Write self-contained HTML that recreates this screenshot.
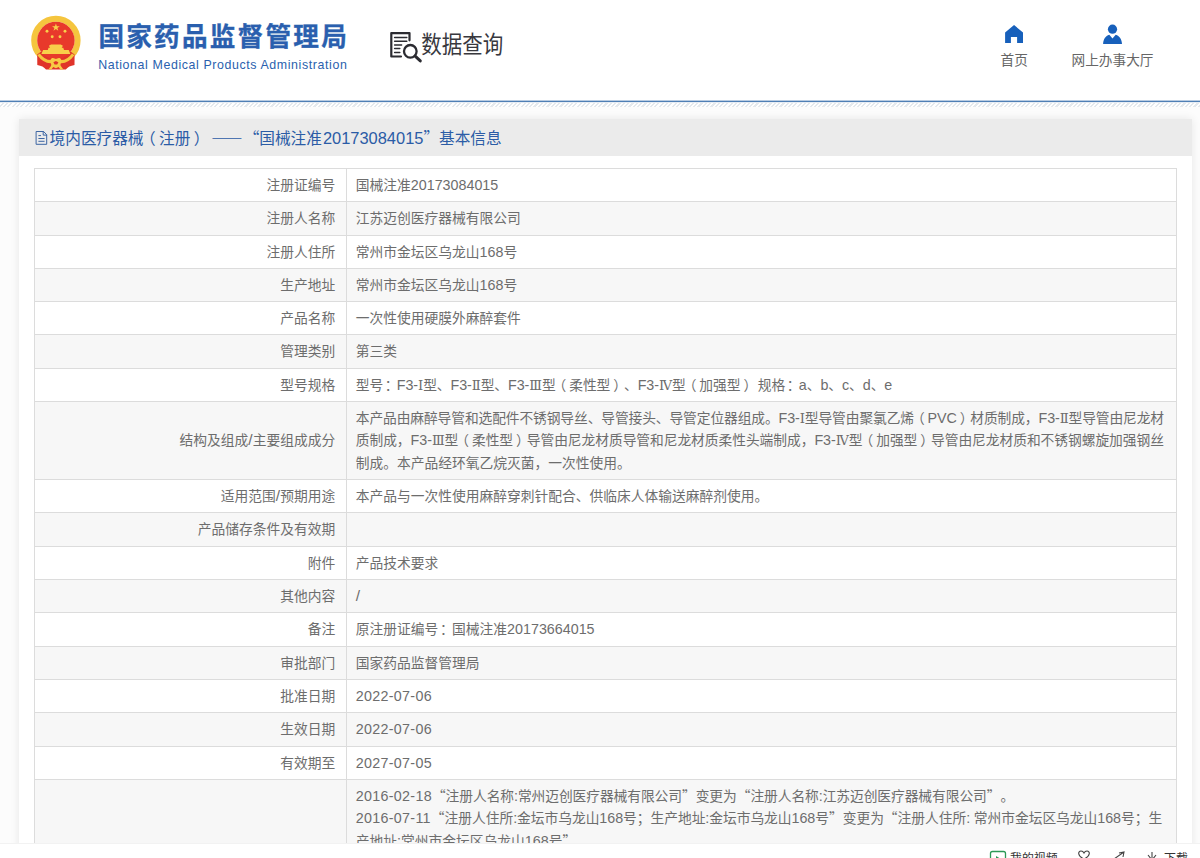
<!DOCTYPE html>
<html lang="zh-CN">
<head>
<meta charset="utf-8">
<title>国家药品监督管理局 数据查询</title>
<style>
*{box-sizing:border-box;margin:0;padding:0}
html,body{width:1200px;height:858px;overflow:hidden;background:#fcfcfc}
body{text-spacing-trim:space-all;font-family:"Liberation Sans","Noto Sans CJK SC",sans-serif;color:#666;position:relative}
.hdr{position:absolute;left:0;top:0;width:1200px;height:101px;background:#fff}
.emblem{position:absolute;left:28px;top:12px;width:56px;height:62px}
.t-cn{-webkit-text-stroke:.35px #2a5fae;position:absolute;left:98.4px;top:17.1px;font-size:25.6px;letter-spacing:2.26px;line-height:40px;font-weight:700;color:#2a5fae;white-space:nowrap}
.t-en{position:absolute;left:98.2px;top:55.7px;font-size:12.4px;letter-spacing:.6px;line-height:18px;color:#2a5fae;white-space:nowrap}
.q-ico{position:absolute;left:385px;top:25px;width:45px;height:43px}
.q-txt{transform:scaleY(1.14);transform-origin:50% 50%;position:absolute;left:421.3px;top:29.2px;font-size:20.5px;line-height:32px;color:#38383e;white-space:nowrap}
.nav{position:absolute;top:51.6px;text-align:center;font-size:13.65px;line-height:18px;color:#666;white-space:nowrap}
.nico{position:absolute;left:995px;top:18px;width:140px;height:30px}
.rule{position:absolute;left:0;top:100px;width:1200px;height:3px;background:linear-gradient(to bottom,rgba(79,127,181,.4) 0,rgba(79,127,181,.4) 1px,#4f7fb5 1px,#4f7fb5 2px,rgba(79,127,181,.12) 2px,rgba(79,127,181,.12) 3px)}
.hatch{position:absolute;left:0;top:102.6px;width:1200px;height:4.7px;
 background:repeating-linear-gradient(135deg,#fff 0,#fff 1.5px,#e5e9ed 1.5px,#e5e9ed 3.05px)}
.card{position:absolute;left:19px;top:118.5px;width:1173px;height:760px;background:#fff;box-shadow:0 0 9px rgba(0,0,0,.09)}
.card-h{position:absolute;left:0;top:0;width:100%;height:37px;background:#ebebeb}
.card-t{position:absolute;left:30.6px;top:9px;font-size:15.65px;line-height:22px;color:#2b5ca6;white-space:nowrap}
.card-t .c{font-family:"Noto Sans CJK SC",sans-serif}
.card-t .n{font-size:16.45px}
.doc-ico{position:absolute;left:11px;top:5.5px;width:40px;height:28px}
table{position:absolute;left:14.7px;top:49.5px;width:1143.8px;border-collapse:collapse;table-layout:fixed;font-size:13.75px;line-height:22.4px;color:#6d6d6d}
td{border:1px solid #dcdcdc;padding:6px 10px 3.9px;vertical-align:middle;white-space:nowrap;overflow:hidden}
td.k{width:312.3px;text-align:right;padding-right:10.8px}
td.v{text-align:left;padding-left:8.8px}
tr:nth-child(even) td{background:#f7f7f7}
tr:last-child td{height:200px}
tr:last-child td.v{vertical-align:top}
.ln{white-space:nowrap}
.n,.rn,.q,.sl,.z,.card-t span{line-height:0}
.d{letter-spacing:.3px}
.z{font-size:0}
.pl,.pr,.co{position:relative;left:-.22em}
.pr{left:.22em}
.co{left:.12em}
.sl{font-size:15.5px}
.n{font-size:14.3px}
.rn{font-family:"DejaVu Serif",serif;font-size:13.2px}
.q{font-family:"Noto Sans CJK SC",sans-serif}
.bbar{position:absolute;left:0;top:843px;width:1200px;height:15px;background:#fff;border-top:1px solid #f2f2f2;overflow:hidden;font-size:11.9px;line-height:16px;color:#333;white-space:nowrap}
.bbar span{position:absolute;top:6px}
.bbar svg{position:absolute;left:980px;top:0;width:220px;height:15px}
</style>
</head>
<body>
<div class="hdr">
  <svg class="emblem" viewBox="28 12 56 62">
    <circle cx="55.9" cy="40.4" r="21.65" fill="none" stroke="#f5c53e" stroke-width="6.1"/>
    <path d="M37.2 54.6 L40.5 52 L71.3 52 L74.6 54.6 L74.5 64.9 C70.5 65.6 67.6 67 65.8 69.4 L46 69.4 C44.2 67 41.3 65.6 37.3 64.9 Z" fill="#e0342a"/>
    <circle cx="55.9" cy="40.4" r="18.7" fill="#e8392b"/>
    <path d="M38.6 54.4 C43.5 61.2 49.5 63 55.9 60.6 C62.3 63 68.3 61.2 73.2 54.4" fill="none" stroke="#f5c53e" stroke-width="3"/>
    <path d="M41.4 54.1 L70.4 54.1 L68.7 50 L64 50 L63.3 47.7 L61.7 47.7 L62.9 45.7 L60.7 44.5 L51.1 44.5 L48.9 45.7 L50.1 47.7 L48.5 47.7 L47.8 50 L43.1 50 Z" fill="#f8cf4a"/>
    <path d="M50.6 59.4 C52.5 56.6 54.5 58.4 55.9 59 C57.3 58.4 59.3 56.6 61.2 59.4 C62.2 62.4 59.5 64 61 66.2 L63.4 69.4 L60.4 69.4 L58.6 66.9 L55.9 68.3 L53.2 66.9 L51.4 69.4 L48.4 69.4 L50.8 66.2 C52.3 64 49.6 62.4 50.6 59.4 Z" fill="#f7cb45"/>
    <path d="M53.4 62.2 L55.9 61 L58.4 62.2 L57.2 64.6 L54.6 64.6 Z" fill="#e0342a"/>
    <g fill="#f8cf4a">
      <path d="M55.9 23.4 L56.85 26.2 L59.8 26.2 L57.4 27.95 L58.3 30.8 L55.9 29.05 L53.5 30.8 L54.4 27.95 L52 26.2 L54.95 26.2 Z"/>
      <circle cx="47" cy="31.2" r="1.45"/><circle cx="65" cy="31.2" r="1.45"/><circle cx="52.2" cy="36.8" r="1.45"/><circle cx="60" cy="36.8" r="1.45"/>
    </g>
  </svg>
  <div class="t-cn">国家药品监督管理局</div>
  <div class="t-en">National Medical Products Administration</div>
  <svg class="q-ico" viewBox="385 25 45 43" fill="none" stroke="#2b2b31" stroke-linecap="round" stroke-linejoin="round">
    <path d="M409.5 40.3 L409.5 33.1 L391.3 33.1 L391.3 56.5 L401 56.5" stroke-width="2.2"/>
    <path d="M394.6 37.5 H406.8 M394.6 41.3 H406.8 M394.6 45 H401.6 M394.6 48.6 H399.8 M394.6 52.4 H399.8" stroke-width="1.5"/>
    <circle cx="410.3" cy="51.3" r="6.3" stroke-width="2.3"/>
    <path d="M415.2 56.2 L420.3 60.9" stroke-width="3"/>
  </svg>
  <div class="q-txt">数据查询</div>
  <svg class="nico" viewBox="995 18 140 30" fill="#1760bb">
    <path d="M1014.05 25.1 L1023 32.4 L1023 42.9 L1017.1 42.9 L1017.1 36.9 L1010.9 36.9 L1010.9 42.9 L1005.1 42.9 L1005.1 32.4 Z"/>
    <circle cx="1112.5" cy="29.2" r="4.6"/>
    <path d="M1103.1 43.9 C1103.3 39.5 1105.5 36 1109.3 34.8 L1112.5 38.6 L1115.7 34.8 C1119.5 36 1121.8 39.5 1122 43.9 Z"/>
  </svg>
  <div class="nav" style="left:984px;width:60.5px">首页</div>
  <div class="nav" style="left:1062px;width:101px">网上办事大厅</div>
</div>
<div class="rule"></div>
<div class="hatch"></div>
<div class="card">
  <div class="card-h">
    <svg class="doc-ico" viewBox="30 124 40 28" fill="none" stroke="#3d66a3" stroke-width="1" stroke-linejoin="round" stroke-linecap="round">
      <path d="M43.2 131.5 L36.1 131.5 L36.1 144.3 L46.7 144.3 L46.7 135.1 Z"/>
      <path d="M43.2 131.5 L43.2 135.1 L46.7 135.1"/>
      <path d="M38.8 135.6 H40.6 M38.8 138.5 H44.2 M38.8 141.3 H44.2"/>
    </svg>
    <div class="card-t"><span class="c">境内医疗器械<span class="pl">（</span>注册<span class="pr">）</span></span><span style="display:inline-block;width:5.3px"> </span><span class="c">——</span><span class="c" style="margin-left:1px">“国械注准</span><span class="n" style="margin-left:1px">20173084015</span><span class="c">”基本信息</span></div>
  </div>
  <table>
    <tr><td class="k">注册证编号</td><td class="v"><span class="ln">国械注准<span class="n">20173084015</span></span></td></tr>
    <tr><td class="k">注册人名称</td><td class="v"><span class="ln">江苏迈创医疗器械有限公司</span></td></tr>
    <tr><td class="k">注册人住所</td><td class="v"><span class="ln">常州市金坛区乌龙山<span class="n">168</span>号</span></td></tr>
    <tr><td class="k">生产地址</td><td class="v"><span class="ln">常州市金坛区乌龙山<span class="n">168</span>号</span></td></tr>
    <tr><td class="k">产品名称</td><td class="v"><span class="ln">一次性使用硬膜外麻醉套件</span></td></tr>
    <tr><td class="k">管理类别</td><td class="v"><span class="ln">第三类</span></td></tr>
    <tr><td class="k">型号规格</td><td class="v"><span class="ln" style="letter-spacing:-0.078px">型号<span class="co">：</span><span class="n">F3-</span><span class="rn">Ⅰ</span>型、<span class="n">F3-</span><span class="rn">Ⅱ</span>型、<span class="n">F3-</span><span class="rn">Ⅲ</span>型<span class="pl">（</span>柔性型<span class="pr">）</span>、<span class="n">F3-</span><span class="rn">Ⅳ</span>型<span class="pl">（</span>加强型<span class="pr">）</span> 规格<span class="co">：</span><span class="n">a</span>、<span class="n">b</span>、<span class="n">c</span>、<span class="n">d</span>、<span class="n">e</span></span></td></tr>
    <tr><td class="k">结构及组成<span class="sl">/</span>主要组成成分</td><td class="v"><span class="ln" style="letter-spacing:-0.111px">本产品由麻醉导管和选配件不锈钢导丝、导管接头、导管定位器组成。<span class="n">F3-</span><span class="rn">Ⅰ</span>型导管由聚氯乙烯<span class="pl">（</span><span class="n">PVC</span><span class="pr">）</span>材质制成，<span class="n">F3-</span><span class="rn">Ⅱ</span>型导管由尼龙材</span><br><span class="ln" style="letter-spacing:-0.053px">质制成，<span class="n">F3-</span><span class="rn">Ⅲ</span>型<span class="pl">（</span>柔性型<span class="pr">）</span>导管由尼龙材质导管和尼龙材质柔性头端制成，<span class="n">F3-</span><span class="rn">Ⅳ</span>型<span class="pl">（</span>加强型<span class="pr">）</span>导管由尼龙材质和不锈钢螺旋加强钢丝</span><br><span class="ln">制成。本产品经环氧乙烷灭菌，一次性使用。</span></td></tr>
    <tr><td class="k">适用范围<span class="sl">/</span>预期用途</td><td class="v"><span class="ln">本产品与一次性使用麻醉穿刺针配合、供临床人体输送麻醉剂使用。</span></td></tr>
    <tr><td class="k">产品储存条件及有效期</td><td class="v"><span class="ln"> </span></td></tr>
    <tr><td class="k">附件</td><td class="v"><span class="ln">产品技术要求</span></td></tr>
    <tr><td class="k">其他内容</td><td class="v"><span class="ln"><span class="sl">/</span></span></td></tr>
    <tr><td class="k">备注</td><td class="v"><span class="ln">原注册证编号<span class="co">：</span>国械注准<span class="n">20173664015</span></span></td></tr>
    <tr><td class="k">审批部门</td><td class="v"><span class="ln">国家药品监督管理局</span></td></tr>
    <tr><td class="k">批准日期</td><td class="v"><span class="ln"><span class="n d">2022-07-06</span></span></td></tr>
    <tr><td class="k">生效日期</td><td class="v"><span class="ln"><span class="n d">2022-07-06</span></span></td></tr>
    <tr><td class="k">有效期至</td><td class="v"><span class="ln"><span class="n d">2027-07-05</span></span></td></tr>
    <tr><td class="k">变更情况</td><td class="v"><span class="ln" style="letter-spacing:-0.077px"><span class="n d">2016-02-18</span><span class="z"> </span><span class="q">“</span>注册人名称<span class="n">:</span>常州迈创医疗器械有限公司<span class="q">”</span>变更为<span class="q">“</span>注册人名称<span class="n">:</span>江苏迈创医疗器械有限公司<span class="q">”</span>。</span><br><span class="ln" style="letter-spacing:-0.040px"><span class="n d">2016-07-11</span><span class="z"> </span><span class="q">“</span>注册人住所<span class="n">:</span>金坛市乌龙山<span class="n">168</span>号；生产地址<span class="n">:</span>金坛市乌龙山<span class="n">168</span>号<span class="q">”</span>变更为<span class="q">“</span>注册人住所<span class="n">:</span> 常州市金坛区乌龙山<span class="n">168</span>号；生</span><br><span class="ln">产地址<span class="n">:</span>常州市金坛区乌龙山<span class="n">168</span>号<span class="q">”</span></span></td></tr>
  </table>
</div>
<div class="bbar">
  <svg viewBox="980 843 220 15" fill="none" stroke="#444" stroke-width="1.1">
    <rect x="990.5" y="850.5" width="15" height="12" rx="2" stroke="#2c9a57" stroke-width="1.3"/>
    <path d="M996 855 L1001 858 L996 861 Z" fill="#2c9a57" stroke="none"/>
    <path d="M1084 858 C1077 855 1078 850 1081 850 C1083 850 1084 852 1084 852 C1084 852 1085 850 1087 850 C1090 850 1091 855 1084 858 Z"/>
    <path d="M1114 858 L1124 851 M1119 852 L1124 851 L1123 856"/>
    <path d="M1152 851 V859 M1148 854 L1152 859 L1156 854"/>
  </svg>
  <span style="left:1010px">我的视频</span>
  <span style="left:1164px">下载</span>
</div>
</body>
</html>
